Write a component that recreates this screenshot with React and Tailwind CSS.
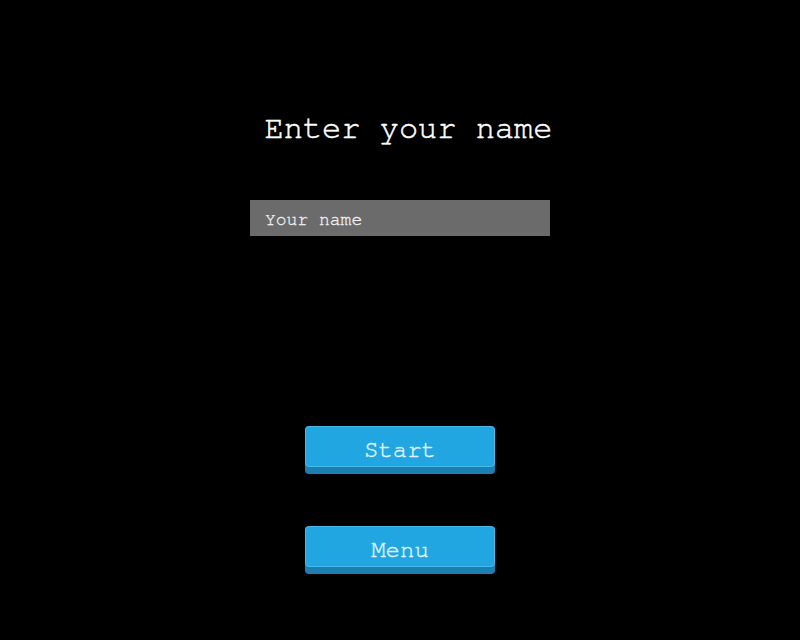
import React from 'react';

function GameButton({ label }) {
  return (
    <button className="relative w-[190px] h-[48px] rounded-[4px] bg-[#1b7fb2] cursor-pointer">
      <div className="absolute left-0 top-0 right-0 bottom-[7px] rounded-[4px] border border-[#45b9ea] bg-[#21a6e1]" />
      <span className="relative flex h-full items-center justify-center text-[24px] leading-none text-[#dff3fc] [-webkit-text-stroke:0.4px_#dff3fc]">
        {label}
      </span>
    </button>
  );
}

export default function App() {
  return (
    <div className="w-[800px] h-[640px] bg-black flex flex-col items-center font-['FreeMono','Liberation_Mono',monospace]">
      <h1 className="mt-[108px] h-[40px] leading-[40px] text-[32px] text-white pl-[17px] [-webkit-text-stroke:0.5px_white]">Enter your name</h1>
      <input
        type="text"
        placeholder="Your name"
        className="mt-[52px] w-[300px] h-[36px] bg-[#6b6b6b] px-[15px] pt-[3px] text-[18px] text-white placeholder:text-[#f2f2f2] outline-none font-['FreeMono','Liberation_Mono',monospace] [-webkit-text-stroke:0.3px_#f2f2f2]"
      />
      <div className="mt-[190px] flex flex-col gap-[52px]">
        <GameButton label="Start" />
        <GameButton label="Menu" />
      </div>
    </div>
  );
}
